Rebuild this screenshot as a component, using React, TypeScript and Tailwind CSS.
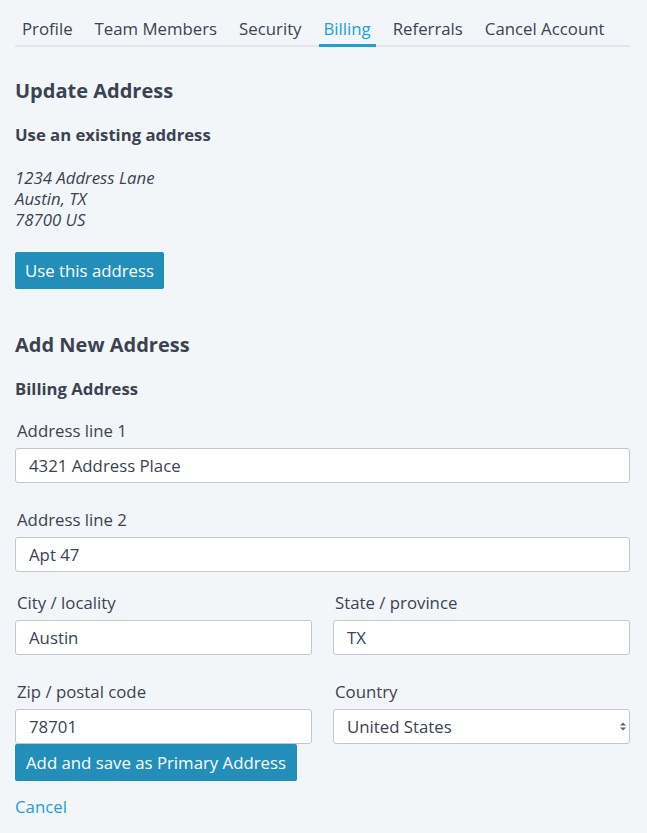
import { useState } from "react";

const tabs = ["Profile", "Team Members", "Security", "Billing", "Referrals", "Cancel Account"];

function Field({ label, value, className = "" }: { label: string; value: string; className?: string }) {
    return (
        <div className={className}>
            <label className="block pl-[2px] text-[16.8px] leading-[20px] text-[#3b4350] mb-[7px]">{label}</label>
            <input
                defaultValue={value}
                className="block w-full h-[35px] bg-white border border-[#c3c7cd] rounded-[3px] px-[13px] text-[16.8px] text-[#3b4350] outline-none"
            />
        </div>
    );
}

function App() {
    const [active] = useState("Billing");

    return (
        <div className="min-h-[833px] bg-[#f3f6f9] text-[#3b4350]" style={{ fontFamily: "'Open Sans', sans-serif" }}>
            <div className="ml-[15px] w-[615px] pt-[17px]">
                <div className="flex gap-[12px] pl-[2px] border-b-[2px] border-[#e2e6ea]">
                    {tabs.map((t) => (
                        <div
                            key={t}
                            className={`px-[5px] pb-[3px] -mb-[2px] text-[16.8px] leading-[24px] border-b-[3px] ${
                                t === active ? "border-[#1aa0dc] text-[#1aa0dc]" : "border-transparent"
                            }`}
                        >
                            {t}
                        </div>
                    ))}
                </div>

                <h2 className="mt-[31px] text-[20px] leading-[26px] font-bold">Update Address</h2>
                <h3 className="mt-[20px] text-[16.7px] leading-[22px] font-bold">Use an existing address</h3>
                <p className="mt-[21px] italic text-[16.8px] leading-[21px]">
                    1234 Address Lane
                    <br />
                    Austin, TX
                    <br />
                    78700 US
                </p>
                <button className="mt-[22px] h-[37px] px-[10px] rounded-[2px] bg-[#228fbb] text-white text-[16.8px]">
                    Use this address
                </button>

                <h2 className="mt-[43px] text-[20px] leading-[26px] font-bold">Add New Address</h2>
                <h3 className="mt-[20px] text-[16.7px] leading-[22px] font-bold">Billing Address</h3>

                <Field className="mt-[21px]" label="Address line 1" value="4321 Address Place" />
                <Field className="mt-[27px]" label="Address line 2" value="Apt 47" />
                <div className="mt-[21px] grid grid-cols-2 gap-x-[21px]">
                    <Field label="City / locality" value="Austin" />
                    <Field label="State / province" value="TX" />
                    <Field className="mt-[27px]" label="Zip / postal code" value="78701" />
                    <div className="mt-[27px]">
                        <label className="block pl-[2px] text-[16.8px] leading-[20px] mb-[7px]">Country</label>
                        <div className="relative">
                            <select className="block w-full h-[35px] appearance-none bg-white border border-[#c3c7cd] rounded-[3px] px-[13px] text-[16.8px] text-[#3b4350] outline-none">
                                <option>United States</option>
                            </select>
                            <svg className="absolute right-[4px] top-[13px]" width="6" height="9" viewBox="0 0 6 9">
                                <path d="M0 3.5 L3 0.5 L6 3.5 Z M0 5.5 L3 8.5 L6 5.5 Z" fill="#5a6270" />
                            </svg>
                        </div>
                    </div>
                </div>
                <button className="h-[37px] px-[11px] rounded-[2px] bg-[#228fbb] text-white text-[16.8px]">
                    Add and save as Primary Address
                </button>
                <div className="mt-[13px]">
                    <a href="#" className="text-[16.8px] text-[#1aa0dc]">Cancel</a>
                </div>
            </div>
        </div>
    );
}

export default App;
